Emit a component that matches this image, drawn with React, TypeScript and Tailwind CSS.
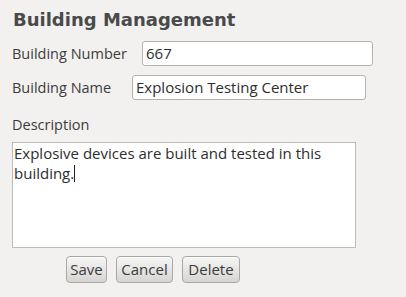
const BTN =
  "h-[27px] rounded-[4px] border border-[#a8a8a6] bg-gradient-to-b from-[#f6f6f5] to-[#d6d5d3] text-[15px] text-[#3c3c3c] shadow-[inset_0_1px_0_#ffffff]";

const App = () => {
  return (
    <div
      className="h-[297px] w-[406px] bg-[#f2f1f0] text-[#3c3c3c]"
      style={{ fontFamily: "'Open Sans', 'DejaVu Sans', sans-serif" }}
    >
      <div className="flex flex-col pl-3 pt-[8px]">
        <h1
          className="ml-px h-[24px] text-[18px] font-bold leading-[24px] text-[#4a4a4a]"
          style={{ fontFamily: "'DejaVu Sans', sans-serif" }}
        >
          Building Management
        </h1>

        <div className="mt-[9px] flex h-[25px] items-center">
          <label className="w-[130px] text-[14.5px]">Building Number</label>
          <div className="flex h-[25px] w-[231px] items-center rounded-[3px] border border-[#b4b3b1] bg-white pl-[3px] text-[15px] text-[#2e2e2e]">
            667
          </div>
        </div>

        <div className="mt-[9px] flex h-[25px] items-center">
          <label className="w-[120px] text-[14.5px]">Building Name</label>
          <div className="flex h-[25px] w-[234px] items-center rounded-[3px] border border-[#b4b3b1] bg-white pl-[3px] text-[15px] text-[#2e2e2e]">
            Explosion Testing Center
          </div>
        </div>

        <div className="mt-[15px] h-[20px] text-[14.5px] leading-[20px]">Description</div>

        <div className="mt-[7px] h-[106px] w-[344px] border border-[#bdbcba] bg-white px-px pt-[1px] text-[15px] leading-[18px] text-[#2e2e2e]">
          Explosive devices are built and tested in this building.
          <span className="inline-block h-[17px] w-px translate-y-[3px] bg-[#222]" />
        </div>

        <div className="ml-[54px] mt-[8px] flex gap-[9px]">
          <button className={BTN + " w-[41px]"}>Save</button>
          <button className={BTN + " w-[57px]"}>Cancel</button>
          <button className={BTN + " w-[58px]"}>Delete</button>
        </div>
      </div>
    </div>
  );
};

export default App;
